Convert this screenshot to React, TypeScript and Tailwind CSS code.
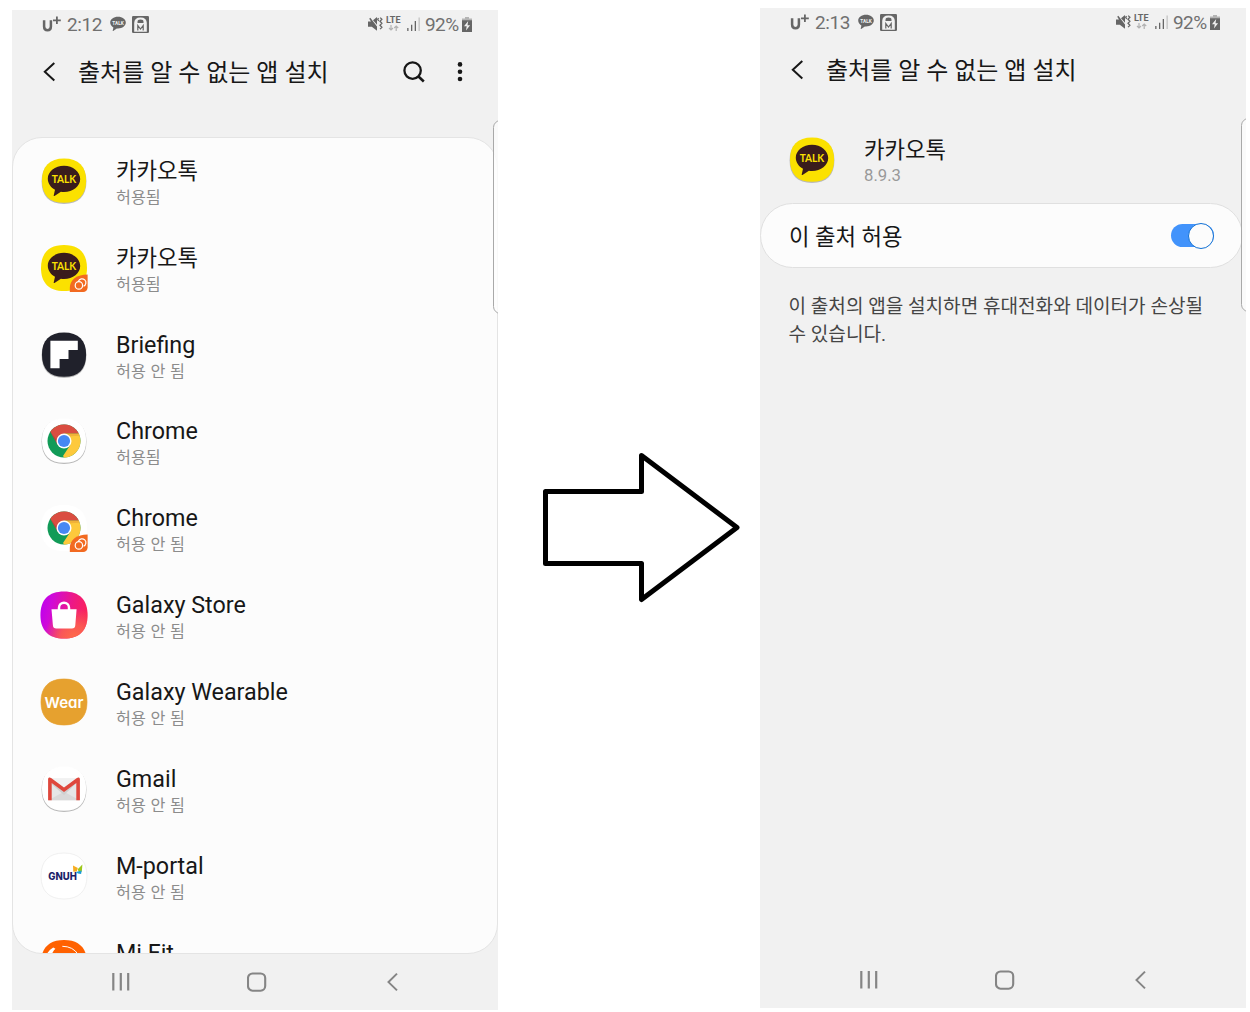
import type { ReactNode } from "react";

const SQUIRCLE = "M1 24C1 9 9 1 24 1S47 9 47 24 39 47 24 47 1 39 1 24Z";

function IconFrame({ fill, shadow = false, stroke, children }: { fill: string; shadow?: boolean; stroke?: string; children: ReactNode }) {
  return (
    <svg viewBox="0 0 48 48" className="block size-12 shrink-0 overflow-visible">
      {shadow && <path d={SQUIRCLE} fill="#b9b9b9" transform="translate(0.6 1.2) scale(.975)" />}
      <path d={SQUIRCLE} fill={fill} stroke={stroke} strokeWidth=".7" transform={shadow ? "translate(1 .6) scale(.96)" : undefined} />
      {children}
    </svg>
  );
}

function DualBadge() {
  return (
    <g>
      <path d="M47.6 30.4V43.6a4.4 4.4 0 0 1-4.4 4.4H29.8v-4C29.8 35.5 37 30.4 47.6 30.4Z" fill="#f26a21" />
      <g fill="none" stroke="#fff" strokeWidth="1.2">
        <path d="M38.4 37.2a3.9 3.9 0 1 1 5.1 5.1" />
        <circle cx="38.9" cy="41.4" r="3.7" />
      </g>
    </g>
  );
}

function TalkIcon({ dual = false }: { dual?: boolean }) {
  return (
    <IconFrame fill="#fbe100" shadow={!dual}>
      <path d="M24 8.800c-9 0-16.2 5.7-16.2 13 0 4.600 2.900 8.600 7.200 10.900L13.700 38.500c-.1.5.4.8.8.5l6.400-4.200c1 .2 2 .3 3.100.3 9 0 16.200-5.800 16.200-13S33 8.800 24 8.800Z" fill="#3a1c1c" />
      <text x="24" y="26.3" textAnchor="middle" textLength="24.5" lengthAdjust="spacingAndGlyphs" className="text-[11px] font-bold [font-family:Lato]" fill="#fbe100">TALK</text>
      {dual && <DualBadge />}
    </IconFrame>
  );
}

function BriefingIcon() {
  return (
    <IconFrame fill="#20212b" shadow>
      <path d="M10.4 9.700H37.800V19H28.500V27.900H19.600V37.300H10.400Z" fill="#fff" />
    </IconFrame>
  );
}

function ChromeIcon({ dual = false }: { dual?: boolean }) {
  return (
    <IconFrame fill="#fff" shadow={!dual}>
      <g transform="translate(24 24)">
        <circle r="16.5" fill="#129b58" />
        <path d="M0-7.4H14.8A16.5 16.5 0 0 1 .1 16.5L-1 15L6.4 3.7Z" fill="#fdc93c" />
        <path d="M0 16.5L7 3.5 6-4 15 0A16.5 16.5 0 0 1 0 16.5Z" fill="#fdc93c" />
        <path d="M14.8-7.4H0L-6.4 3.7-13.7-9.2A16.5 16.5 0 0 1 14.8-7.4Z" fill="#da4d41" />
        <path d="M0-7.4H14.8l.6 2.1L6-4.8Z" fill="#e9a838" opacity=".7" />
        <path d="M-13.7-9.2L-6.4 3.7-7.4-1Z" fill="#913936" opacity=".5" />
        <circle r="7.5" fill="#fff" />
        <circle r="6.1" fill="#4688f4" />
      </g>
      {dual && <DualBadge />}
    </IconFrame>
  );
}

function StoreIcon() {
  return (
    <svg viewBox="0 0 48 48" className="block size-12 shrink-0">
      <defs>
        <linearGradient id="storeBase" x1="0" y1=".25" x2="1" y2=".45">
          <stop offset="0" stopColor="#bd00ef" />
          <stop offset=".22" stopColor="#cf0ad8" />
          <stop offset=".65" stopColor="#ed1886" />
          <stop offset="1" stopColor="#fb2358" />
        </linearGradient>
        <radialGradient id="storeWarm" cx=".72" cy="1" r=".65">
          <stop offset="0" stopColor="#ff6c48" />
          <stop offset=".45" stopColor="#fb5e51" stopOpacity=".9" />
          <stop offset="1" stopColor="#fb5e51" stopOpacity="0" />
        </radialGradient>
      </defs>
      <path d={SQUIRCLE} fill="url(#storeBase)" transform="translate(-.6 -.6) scale(1.025)" />
      <path d={SQUIRCLE} fill="url(#storeWarm)" transform="translate(-.6 -.6) scale(1.025)" />
      <path d="M19 19.500v-2.800a5 5 0 0 1 10 0V19.500" fill="none" stroke="#fff" strokeWidth="2.5" />
      <path d="M11.5 18.300H36.600L35.300 34.200a3.400 3.400 0 0 1-3.400 3.200H16.300a3.400 3.400 0 0 1-3.400-3.200Z" fill="#fff" />
    </svg>
  );
}

function WearIcon() {
  return (
    <IconFrame fill="#e6a12f" stroke="#e6a12f">
      <text x="24" y="30" textAnchor="middle" textLength="39" lengthAdjust="spacingAndGlyphs" className="text-[15px] font-semibold [font-family:Inter] [font-feature-settings:'cv11']" fill="#fff">Wear</text>
    </IconFrame>
  );
}

function GmailIcon() {
  return (
    <IconFrame fill="#fff" shadow>
      <path d="M8.3 13.5H39.7V35.2H8.3Z" fill="#e6e6e6" />
      <path d="M8.3 35.2L24 26.8l15.7 8.4Z" fill="#d9d9d9" />
      <path d="M11.5 15L24 26.5 36.5 15V18L24 30 11.5 19Z" fill="#cfcfcf" />
      <path d="M11 13.5H37L24 23.3Z" fill="#f1f1f1" />
      <path d="M8.1 35.2V14.3c0-1.8 1.6-2.2 3-1.2L24 22.6l12.9-9.5c1.4-1 3-.6 3 1.2v20.9h-3.6V17.9L24 26.9 11.7 17.9v17.3Z" fill="#df473c" />
    </IconFrame>
  );
}

function PortalIcon() {
  return (
    <IconFrame fill="#fff" stroke="#e9e9e9">
      <text x="8.3" y="28" textLength="28.5" lengthAdjust="spacingAndGlyphs" className="text-[10px] font-extrabold [font-family:Inter]" fill="#1b2268">GNUH</text>
      <path d="M33 13.6l4.8 2.5-1.1 3.4-3.4.3Z" fill="#f7ac20" />
      <path d="M42.4 12.6l-4.7 4.6 1.3 3.2 2.8-1Z" fill="#9cc71c" />
      <path d="M36 20.1l5.7-1.7-.6 3.5-3.2-.3Z" fill="#1b9fd7" />
    </IconFrame>
  );
}

function MiFitIcon() {
  return (
    <IconFrame fill="#ff6100">
      <path d="M5 18.300Q8.500 11 13.200 8.400l2.200 1.400Q12.500 12.500 10.600 18.300Z" fill="#fff" />
      <path d="M22.3 7.3Q33 7.3 38.2 15.6" fill="none" stroke="#fff" strokeWidth="1" />
    </IconFrame>
  );
}

function StatusBar({ time }: { time: string }) {
  return (
    <div className="flex h-7 shrink-0 items-center pl-[30px] pr-[25px] text-[#666]">
      <svg viewBox="0 0 20 18" className="h-[18px] w-5 overflow-visible" fill="none" stroke="currentColor">
        <path d="M2.100 5.300v6.300q0 3.700 3.400 3.700t3.400-3.700V5.300" strokeWidth="2.5" />
        <path d="M11 5.300h7.800M14.900 1.600v7.400" strokeWidth="1.800" />
      </svg>
      <span className="ml-[5px] w-[36px] whitespace-nowrap pt-px font-['Roboto'] text-[19px] leading-7 tracking-[-0.4px] text-[#707070]">{time}</span>
      <svg viewBox="0 0 16 16" className="ml-[7px] size-4">
        <path d="M8 .8C3.6.8.2 3.3.2 6.6c0 2.1 1.3 3.8 3.2 4.8l-.7 3.3c0 .3.2.4.5.2l3.6-2.5 1.2.1c4.4 0 7.8-2.6 7.8-5.9S12.4.8 8 .8Z" fill="currentColor" />
        <text x="8" y="8.5" textAnchor="middle" textLength="11.5" lengthAdjust="spacingAndGlyphs" className="font-['Roboto'] text-[5px] font-bold" fill="#f1f1f1">TALK</text>
      </svg>
      <svg viewBox="0 0 17 17" className="ml-1.5 size-[17px]">
        <rect width="17" height="17" rx="1.2" fill="currentColor" />
        <path d="M2.2 15.8V7q0-5.6 6.3-5.6T14.8 7v8.8Z" fill="#f1f1f1" />
        <path d="M5.5 7V6q0-2.4 3-2.4t3 2.4V7Z" fill="currentColor" />
        <path d="M5.8 14.500V9.500l2.700 3.500 2.700-3.500v5" fill="none" stroke="currentColor" strokeWidth="1.2" />
      </svg>
      <div className="flex-1" />
      <svg viewBox="0 0 15 16" className="h-4 w-[15px]">
        <path d="M0 5.500H3L1.200 2.700 2.300 1.800 9 10.500V14.700L3.800 10.800H0ZM5 4.200 9 1V8.800Z" fill="currentColor" />
        <path d="M10.500 2l-.8 1.300 1 1.700M12.200 1.600l1.700 1.700-1.900 2 1.900 2-1.900 2 1.900 2-1.800 1.800" fill="none" stroke="currentColor" strokeWidth="1.300" />
      </svg>
      <svg viewBox="0 0 15 16" className="ml-[3px] h-4 w-[15px]">
        <text x="0" y="7.300" textLength="14.5" lengthAdjust="spacingAndGlyphs" className="font-['Roboto'] text-[9px] font-bold" fill="currentColor">LTE</text>
        <path d="M5 9v5M3 12l2 2 2-2M10.2 15v-5M8.2 12l2-2 2 2" fill="none" stroke="#b2b2b2" strokeWidth="1.2" />
      </svg>
      <svg viewBox="0 0 13 14" className="ml-1.5 h-3.5 w-[13px]">
        <path d="M.2 11h1.3v3H.2ZM4 7.7h1.3V14H4ZM7.7 4H9v10H7.7Z" fill="currentColor" />
        <path d="M11.5.4h1.3V14h-1.3Z" fill="#c3c3c3" />
      </svg>
      <span className="ml-[5px] w-[35px] whitespace-nowrap pt-px font-['Roboto'] text-[19px] leading-7 tracking-[-0.6px] text-[#707070]">92%</span>
      <svg viewBox="0 0 10 15" className="ml-0.5 mr-px h-[15px] w-2.5">
        <path d="M3 0h4v1.6h3V4H0V1.6h3Z" fill="#b4b4b4" />
        <path d="M0 3.3h10V15H0Z" fill="currentColor" />
        <path d="M6.2 4L2 9.3h2.7L4 13.4l4.1-5.2H5.5Z" fill="#f1f1f1" />
      </svg>
    </div>
  );
}

function Header({ actions = false }: { actions?: boolean }) {
  return (
    <header className="flex h-[68px] shrink-0 items-center pl-[31px] text-[#171717]">
      <svg viewBox="0 0 12 20" className="h-5 w-3" fill="none" stroke="currentColor" strokeWidth="2"><path d="M11.3 1L1.8 9.8l9.5 8.8" /></svg>
      <h1 className="ml-[23px] w-[260px] whitespace-nowrap pt-0.5 text-[24px] leading-9">출처를 알 수 없는 앱 설치</h1>
      {actions && (
        <>
          <svg viewBox="0 0 22 22" className="ml-[65px] size-[22px]" fill="none" stroke="currentColor" strokeWidth="2.3"><circle cx="9.6" cy="9.6" r="8.2" /><path d="M15.2 15.2l5.6 5.3" strokeWidth="2.6" /></svg>
          <svg viewBox="0 0 6 20" className="ml-[32px] h-5 w-1.5" fill="currentColor"><circle cx="3" cy="2.4" r="2.3" /><circle cx="3" cy="9.7" r="2.3" /><circle cx="3" cy="17" r="2.3" /></svg>
        </>
      )}
    </header>
  );
}

function NavBar() {
  return (
    <nav className="flex h-14 shrink-0 items-center pl-[100px] text-[#858585]">
      <svg viewBox="0 0 18 20" className="h-5 w-[18px]" stroke="currentColor" strokeWidth="2.2"><path d="M1.3 1v17.6M8.8 1v17.6M16.2 1v17.6" /></svg>
      <svg viewBox="0 0 20 20" className="ml-[117px] size-5" fill="none" stroke="currentColor" strokeWidth="2.1"><rect x="1" y="1.500" width="17.2" height="17.2" rx="4.6" /></svg>
      <svg viewBox="0 0 11 20" className="ml-[120px] h-5 w-[11px]" fill="none" stroke="currentColor" strokeWidth="2"><path d="M10 1.600L1.500 10.100l8.500 8.300" /></svg>
    </nav>
  );
}

function Phone({ time, actions, children }: { time: string; actions?: boolean; children: ReactNode }) {
  return (
    <section className="relative flex h-[1000px] w-[486px] flex-col overflow-hidden bg-[#f1f1f1]">
      <StatusBar time={time} />
      <Header actions={actions} />
      {children}
      <NavBar />
      <div className="absolute -right-2.5 top-[110px] h-[194px] w-[15px] rounded-lg border border-[#a9a9a9] bg-[#fcfcfc]/80" />
    </section>
  );
}

const APPS: { name: string; allowed: boolean; icon: ReactNode; korean?: boolean }[] = [
  { name: "카카오톡", allowed: true, icon: <TalkIcon />, korean: true },
  { name: "카카오톡", allowed: true, icon: <TalkIcon dual />, korean: true },
  { name: "Briefing", allowed: false, icon: <BriefingIcon /> },
  { name: "Chrome", allowed: true, icon: <ChromeIcon /> },
  { name: "Chrome", allowed: false, icon: <ChromeIcon dual /> },
  { name: "Galaxy Store", allowed: false, icon: <StoreIcon /> },
  { name: "Galaxy Wearable", allowed: false, icon: <WearIcon /> },
  { name: "Gmail", allowed: false, icon: <GmailIcon /> },
  { name: "M-portal", allowed: false, icon: <PortalIcon /> },
  { name: "Mi Fit", allowed: false, icon: <MiFitIcon /> },
];

export default function App() {
  return (
    <main className="flex h-[1012px] w-[1250px] overflow-hidden bg-white pl-3 font-['Roboto','Noto_Sans_CJK_KR',sans-serif] text-[#171717]">
      <div className="mt-2.5">
        <Phone time="2:12" actions>
          <div className="mt-[31px] h-[817px] shrink-0 overflow-hidden rounded-[30px] border border-[#e4e4e4] bg-[#fcfcfc]">
            {APPS.map((app, i) => (
              <div key={i} className="flex h-[86.85px] items-center pb-px pl-[27px]">
                {app.icon}
                <div className="ml-7 pt-1">
                  <div className={app.korean ? "mb-0.5 whitespace-nowrap text-[22.3px] leading-7" : "mb-0.5 whitespace-nowrap text-[23.3px] leading-7"}>{app.name}</div>
                  <div className="whitespace-nowrap text-[16.2px] leading-[22px] text-[#8c8c8c] [word-spacing:0.6px]">{app.allowed ? "허용됨" : "허용 안 됨"}</div>
                </div>
              </div>
            ))}
          </div>
        </Phone>
      </div>
      <svg viewBox="0 0 200 152" className="ml-[43px] mt-[451px] h-[152px] w-[200px] shrink-0" fill="none" stroke="#000" strokeWidth="5" strokeLinejoin="round">
        <path d="M4.5 40.5h96V4.5L196 76.5 100.500 148.500v-36h-96Z" />
      </svg>
      <div className="ml-[19px] mt-2">
        <Phone time="2:13">
          <div className="flex h-[99px] shrink-0 items-center pl-7 pt-[13px]">
            <TalkIcon />
            <div className="ml-7 pt-0.5">
              <div className="text-[22.3px] leading-[30px]">카카오톡</div>
              <div className="text-[16.7px] leading-[22px] text-[#999]">8.9.3</div>
            </div>
          </div>
          <div className="flex h-[65px] w-[483px] shrink-0 items-center justify-between rounded-full border border-[#e0e0e0] bg-[#fcfcfc] pl-7 pr-[28px]">
            <span className="pt-[3px] text-[22.3px] leading-8">이 출처 허용</span>
            <div className="flex h-[23px] w-[43px] items-center justify-end rounded-full bg-[#4293fb]">
              <div className="size-[26px] shrink-0 rounded-full border-[1.5px] border-[#1271d4] bg-[#fcfcfc]" />
            </div>
          </div>
          <p className="mt-[25px] flex-1 whitespace-nowrap pl-[28.5px] text-[19.08px] leading-7 text-[#454545]">
            이 출처의 앱을 설치하면 휴대전화와 데이터가 손상될<br />수 있습니다.
          </p>
        </Phone>
      </div>
    </main>
  );
}
